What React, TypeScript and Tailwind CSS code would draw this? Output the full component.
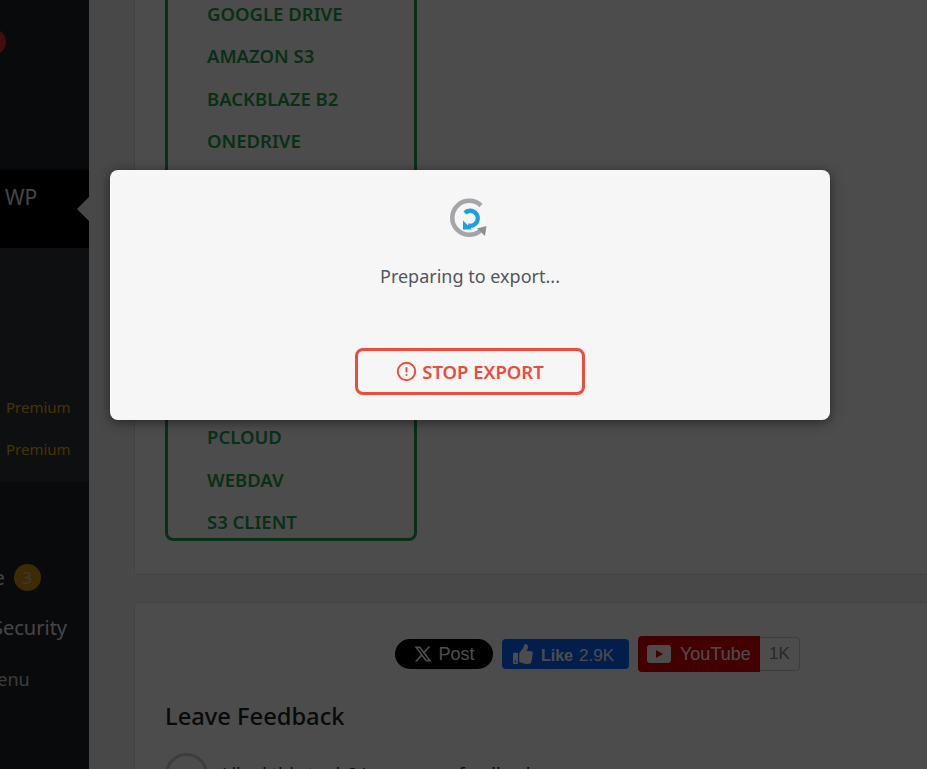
import React from 'react';
import { CircleAlert } from 'lucide-react';
import { FaThumbsUp } from 'react-icons/fa';
import { RiTwitterXLine } from 'react-icons/ri';

const storages = [
  'GOOGLE DRIVE',
  'AMAZON S3',
  'BACKBLAZE B2',
  'ONEDRIVE',
  'DROPBOX',
  'FTP',
  'SFTP',
  'WASABI',
  'BOX',
  'MEGA',
  'PCLOUD',
  'WEBDAV',
  'S3 CLIENT',
];

const ExportSpinner = () => (
  <svg width="42" height="42" viewBox="2 -1 42 42" fill="none">
    <path d="M34 6.5A17 17 0 1 0 33 32" stroke="#a3a5a8" strokeWidth="4.5" />
    <path d="M30 29.5l9.5-2.5-1.5 10z" fill="#8d8f92" />
    <path d="M18 14A7.5 7.5 0 1 1 21 26.5" stroke="#1ba1e2" strokeWidth="4.5" />
    <path d="M16 21.5v9h9z" fill="#1ba1e2" />
  </svg>
);

const Sidebar = () => (
  <aside className="w-[89px] shrink-0 overflow-hidden bg-[#1d2327] text-[#f0f0f1] text-[17px]">
    <div className="h-[170px] pt-[29px]">
      <div className="-ml-[20px] h-[26px] w-[26px] rounded-full bg-[#e02c2c]" />
    </div>
    <div className="relative flex h-[78px] bg-black pl-[5px] pt-[13px] text-[21px] leading-7 text-[#e6e6e6]">
      <span>WP</span>
      <div className="absolute right-0 top-[27px] border-y-[12px] border-r-[12px] border-y-transparent border-r-[#f0f0f1]" />
    </div>
    <div className="flex h-[234px] flex-col justify-end gap-[18px] bg-[#2c3338] pb-[21px] pl-[6px] text-[15px] leading-6 text-[#e0b000]">
      <span>Premium</span>
      <span>Premium</span>
    </div>
    <div className="-ml-[6px] flex h-[110px] items-end gap-[9px] text-[19px] leading-7">
      <span className="text-[#e8e8e8]">e</span>
      <span className="mb-px flex h-[27px] w-[27px] items-center justify-center rounded-full bg-[#d09010] text-[17px] text-[#c0c0c0]">3</span>
    </div>
    <div className="mt-[22px] -ml-[8px] text-[20px] leading-7 text-[#e8e8e8]">Security</div>
    <div className="mt-[25px] -ml-[19px] text-[18px] leading-6 text-[#c8c8c8]">Menu</div>
  </aside>
);

const StorageCard = () => (
  <section className="w-[1000px] border border-[#e0e0e0] bg-white pb-[33px] pl-[30px] pt-[10px]">
    <div className="h-[570px] w-[252px] rounded-lg border-[3px] border-[#1ba14f] pl-[39px] pt-[19px]">
      {storages.map((name) => (
        <div key={name} className="h-[42.33px] text-[18.5px] font-semibold leading-[42.33px] text-[#1ba14f]">
          {name}
        </div>
      ))}
    </div>
  </section>
);

const SocialRow = () => (
  <div className="flex h-[36px] items-center pl-[230px] font-['Liberation_Sans',sans-serif]">
    <div className="flex h-[30px] w-[98px] items-center justify-center gap-[5px] rounded-full bg-black text-[18px] text-white">
      <RiTwitterXLine size={20} />
      <span>Post</span>
    </div>
    <div className="ml-[9px] flex h-[30px] w-[127px] items-center gap-[6px] rounded bg-[#0866ff] pl-[11px] text-[16px] text-white">
      <FaThumbsUp size={20} />
      <span className="ml-[2px] mt-[3px] font-bold">Like</span>
      <span className="mt-[3px] text-[17px]">2.9K</span>
    </div>
    <div className="ml-[9px] flex h-[36px] w-[122px] items-center gap-[9px] rounded-l bg-[#e10000] pl-[9px] text-[18px] text-white">
      <svg width="24" height="18" viewBox="0 0 24 18">
        <rect width="24" height="18" rx="3" fill="#fff" />
        <path d="M9 5l7 4-7 4z" fill="#e10000" />
      </svg>
      <span>YouTube</span>
    </div>
    <div className="flex h-[34px] w-[40px] items-center justify-center rounded-r border border-l-0 border-[#cfcfcf] text-[17px] text-[#888]">
      1K
    </div>
  </div>
);

const FeedbackCard = () => (
  <section className="mt-[27px] w-[1000px] border border-[#e0e0e0] bg-white pl-[30px] pt-[33px]">
    <SocialRow />
    <h2 className="mt-[28px] text-[23.7px] font-medium leading-8 text-[#1d2327]">Leave Feedback</h2>
    <div className="mt-[21px] flex gap-[14px]">
      <div className="h-[43px] w-[43px] shrink-0 rounded-full border-[3px] border-[#ccc]" />
      <p className="mt-[7px] text-[18px] leading-7 text-[#1d2327]">Liked this topic? Leave your feedback</p>
    </div>
  </section>
);

const ExportModal = () => (
  <div className="absolute left-[110px] top-[170px] flex h-[250px] w-[720px] flex-col items-center rounded-lg bg-[#f6f6f6] pt-[28px] shadow-[0_2px_12px_rgba(0,0,0,0.5)]">
    <ExportSpinner />
    <p className="mt-[22px] text-[18px] leading-7 text-[#50575e]">Preparing to export...</p>
    <button className="mt-[58px] flex h-[47px] w-[230px] items-center justify-center gap-[5px] rounded-lg border-[3px] border-[#ef4b3a] text-[18.5px] font-semibold text-[#ef4b3a]">
      <CircleAlert size={21} strokeWidth={2.2} />
      <span>STOP EXPORT</span>
    </button>
  </div>
);

export default function App() {
  return (
    <div className="relative flex h-[769px] w-[927px] overflow-hidden bg-[#f0f0f1] font-['Noto_Sans',sans-serif]">
      <Sidebar />
      <main className="min-w-0 flex-1 overflow-hidden pl-[45px]">
        <div className="-mt-[40px]">
          <StorageCard />
          <FeedbackCard />
        </div>
      </main>
      <div className="absolute inset-0 bg-black/70" />
      <ExportModal />
    </div>
  );
}
